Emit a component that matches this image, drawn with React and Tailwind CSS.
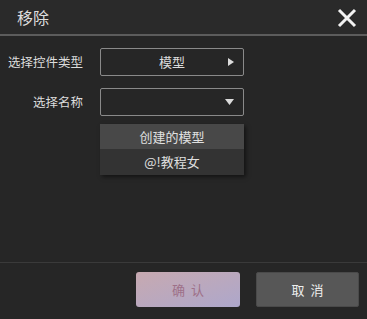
export default function App() {
  return (
    <div
      className="w-[367px] h-[319px] bg-[#262626] flex flex-col overflow-hidden"
      style={{ fontFamily: '"Noto Sans CJK SC", "Noto Sans", sans-serif' }}
    >
      {/* Header */}
      <div className="h-[36px] bg-[#2a2a2a] flex items-center justify-between pl-[17px] pr-[10px] border-b-2 border-[#5c5c5c]">
        <span className="text-[16px] text-[#dedede] leading-none">移除</span>
        <svg width="20" height="20" viewBox="0 0 20 20" className="mt-[1px]">
          <path d="M2 2 L18 18 M18 2 L2 18" stroke="#f2f2f2" strokeWidth="3" strokeLinecap="butt" />
        </svg>
      </div>

      {/* Body */}
      <div className="flex-1 flex flex-col pt-[12px]">
        <div className="flex items-center h-[28px]">
          <span className="w-[84px] text-right text-[12.5px] text-[#dcdcdc] pr-[1px]">选择控件类型</span>
          <div className="ml-[16px] w-[144px] h-[28px] border border-[#8a8a8a] rounded-[2px] flex items-center justify-center relative">
            <span className="text-[13px] text-[#dcdcdc]">模型</span>
            <svg width="6" height="8" viewBox="0 0 6 8" className="absolute right-[9px]">
              <path d="M0 0 L6 4 L0 8 Z" fill="#dcdcdc" />
            </svg>
          </div>
        </div>

        <div className="flex items-center h-[28px] mt-[12px]">
          <span className="w-[84px] text-right text-[12.5px] text-[#dcdcdc] pr-[1px]">选择名称</span>
          <div className="ml-[16px] w-[144px] h-[28px] border border-[#8a8a8a] rounded-[2px] relative">
            <svg width="9" height="6" viewBox="0 0 9 6" className="absolute right-[9px] top-[10px]">
              <path d="M0 0 L9 0 L4.5 6 Z" fill="#dcdcdc" />
            </svg>
          </div>
        </div>

        <div className="ml-[100px] mt-[8px] w-[144px] flex flex-col shadow-[2px_2px_4px_rgba(0,0,0,0.5)]">
          <div className="h-[25px] bg-[#484848] flex items-center justify-center text-[13px] text-[#e0e0e0]">
            创建的模型
          </div>
          <div className="h-[26px] bg-[#333333] flex items-center justify-center text-[13px] text-[#e0e0e0]">
            @!教程女
          </div>
        </div>
      </div>

      {/* Footer */}
      <div className="h-[57px] border-t border-[#3a3a3a] flex items-start justify-end gap-[16px] pr-[8px] pt-[9px]">
        <button className="w-[104px] h-[35px] rounded-[3px] bg-gradient-to-br from-[#c7a9b0] to-[#ada7cb] text-[13px] text-[#9e7088] tracking-[6px] pl-[6px]">
          确认
        </button>
        <button className="w-[103px] h-[35px] rounded-[2px] bg-[#575757] border border-[#4a4a4a] text-[13px] text-[#eeeeee] tracking-[6px] pl-[6px]">
          取消
        </button>
      </div>
    </div>
  );
}
